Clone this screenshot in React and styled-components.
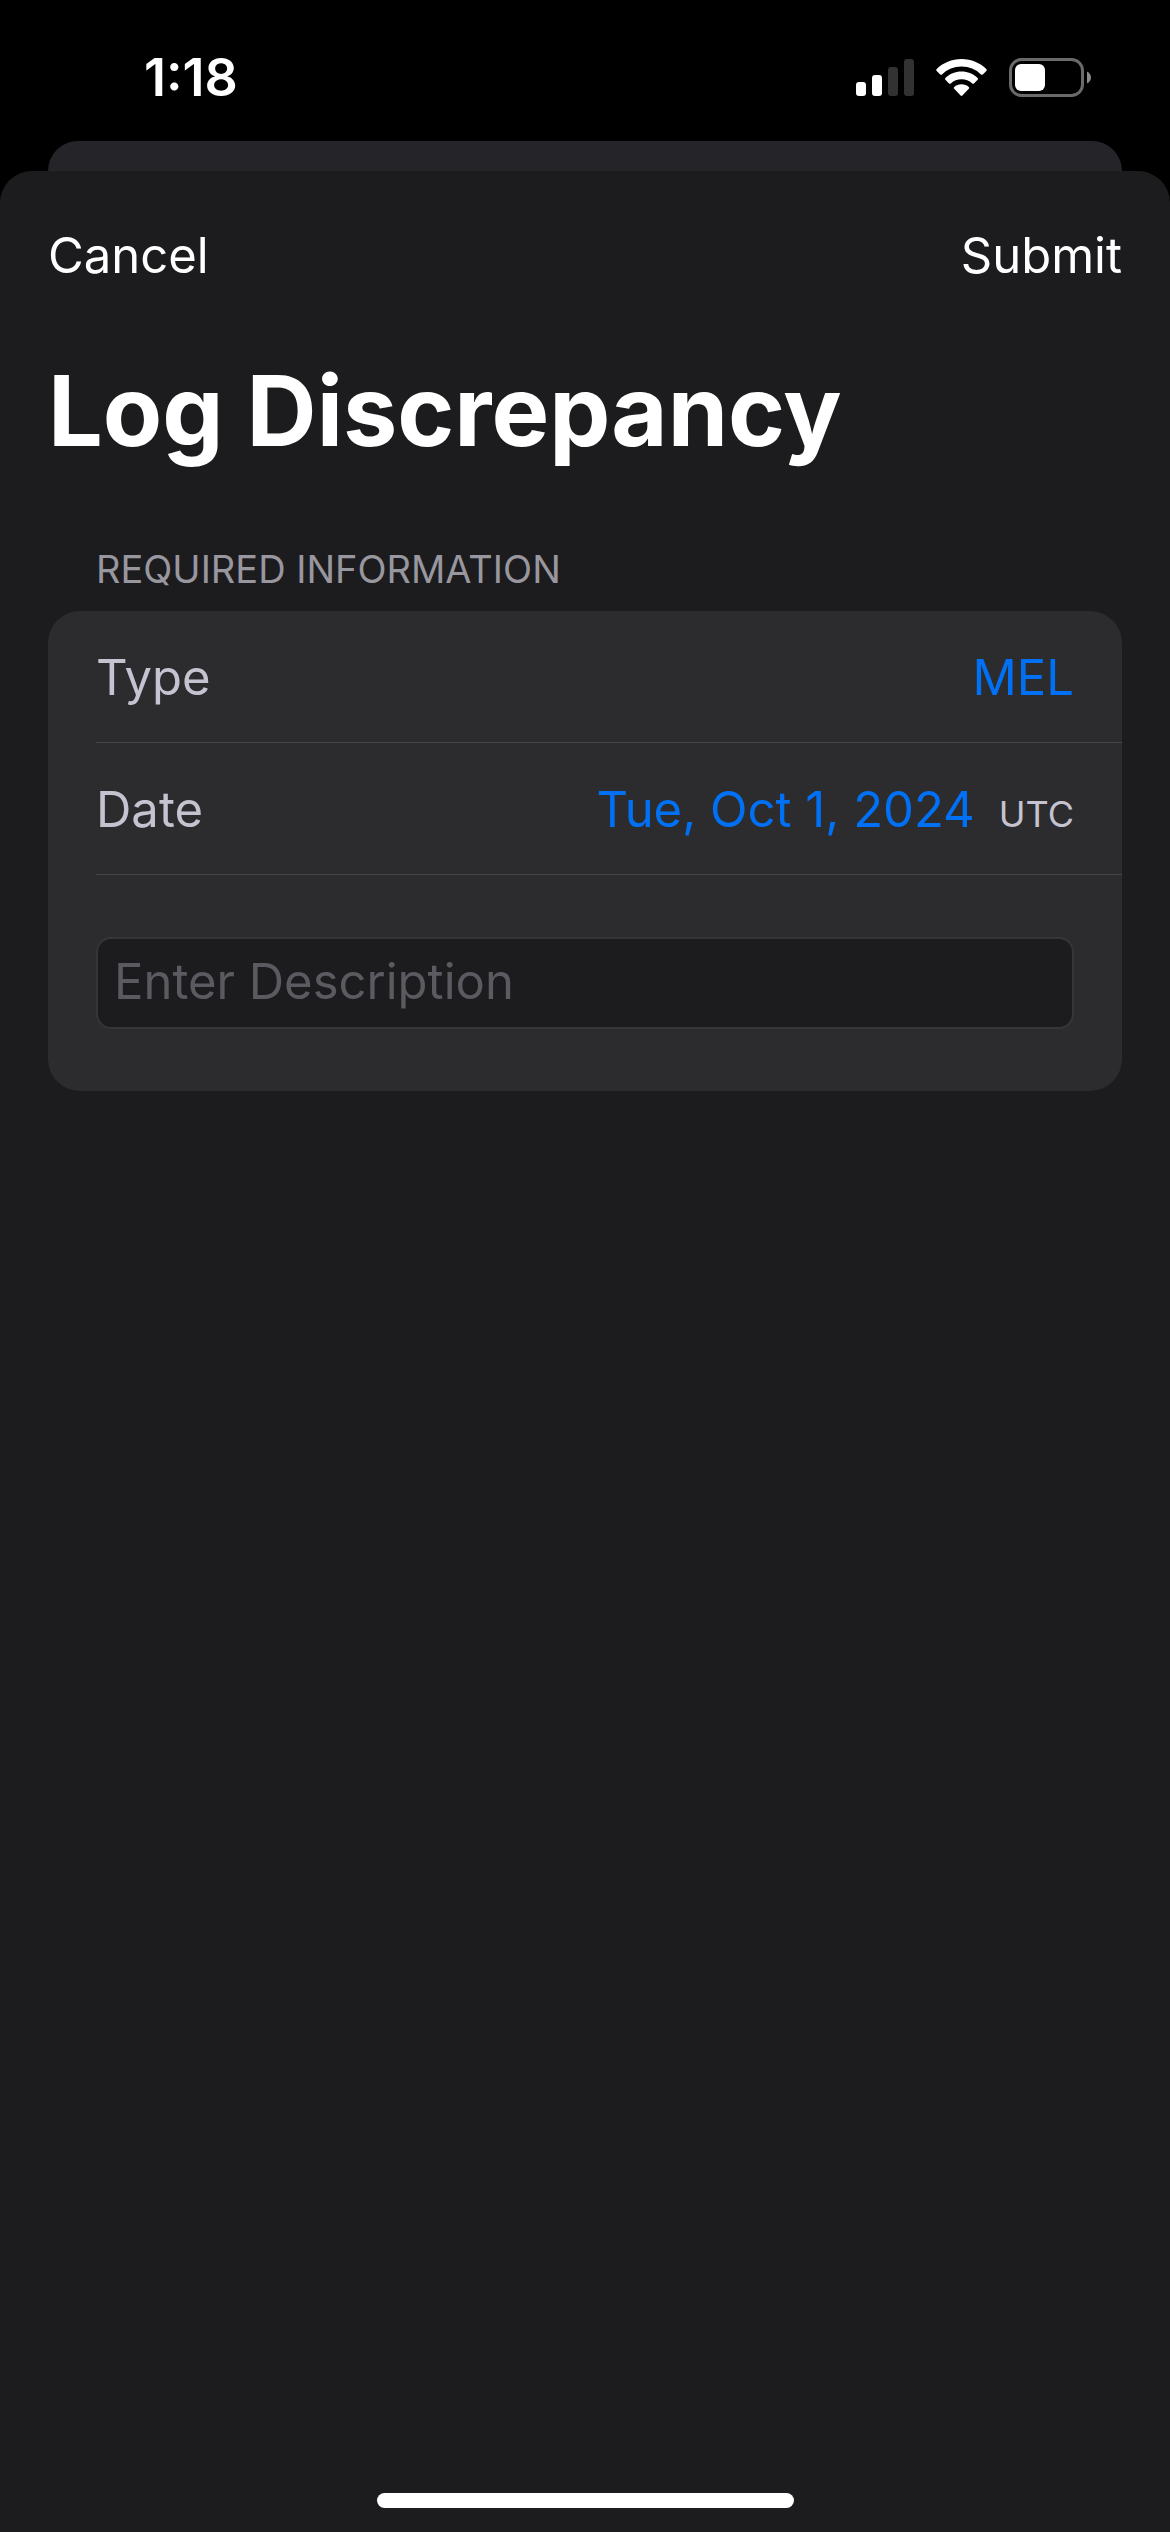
import React, { useState } from "react";
import styled, { createGlobalStyle } from "styled-components";

function SignalIcon() {
  return (
    <svg width="58" height="38" viewBox="0 0 58 38" fill="#fff">
      <rect x="0" y="23" width="10" height="14" rx="3" />
      <rect x="16" y="16" width="10" height="21" rx="3" />
      <rect x="32" y="8" width="10" height="29" rx="3" fill="#323232" />
      <rect x="48" y="0" width="10" height="37" rx="3" fill="#323232" />
    </svg>
  );
}

function WifiIcon() {
  return (
    <svg width="51" height="38" viewBox="0 0 51 38" fill="#fff">
      <path d="M25.5 0C35.2 0 44.1 3.8 50.3 10.1a1.3 1.3 0 0 1 0 1.8l-3.5 3.5a1.3 1.3 0 0 1-1.8 0A28 28 0 0 0 25.5 7.6 28 28 0 0 0 6 15.4a1.3 1.3 0 0 1-1.8 0L.7 11.9a1.3 1.3 0 0 1 0-1.8C6.9 3.8 15.8 0 25.5 0Z" />
      <path d="M25.5 12.6c6.2 0 11.9 2.4 16.1 6.3a1.3 1.3 0 0 1 0 1.9l-3.6 3.6a1.3 1.3 0 0 1-1.8 0 15.7 15.7 0 0 0-21.4 0 1.3 1.3 0 0 1-1.8 0l-3.6-3.6a1.3 1.3 0 0 1 0-1.9c4.2-3.9 9.9-6.3 16.1-6.3Z" />
      <path d="M25.5 25.2c2.8 0 5.4 1 7.3 2.7a1.3 1.3 0 0 1 0 1.9l-6.4 6.7a1.3 1.3 0 0 1-1.8 0l-6.4-6.7a1.3 1.3 0 0 1 0-1.9c1.9-1.7 4.5-2.7 7.3-2.7Z" />
    </svg>
  );
}

function BatteryIcon() {
  return (
    <svg width="82" height="40" viewBox="0 0 82 40">
      <rect
        x="1.5"
        y="1.5"
        width="72"
        height="36"
        rx="11"
        fill="none"
        stroke="#6a6a6a"
        strokeWidth="3"
      />
      <rect x="6" y="6" width="30" height="27" rx="6" fill="#fff" />
      <path d="M78 13.5c2.4 1 4 3.4 4 6s-1.6 5-4 6Z" fill="#8a8a8a" />
    </svg>
  );
}

function App() {
  const [type, setType] = useState("MEL");
  const [description, setDescription] = useState("");

  return (
    <Page>
      <GlobalStyle />
      <StatusBar>
        <Time>1:18</Time>
        <StatusIcons>
          <SignalIcon />
          <WifiIcon />
          <BatteryIcon />
        </StatusIcons>
      </StatusBar>
      <BackSheet />
      <Sheet>
        <Toolbar>
          <ToolbarButton type="button">Cancel</ToolbarButton>
          <ToolbarButton type="submit" form="discrepancy">
            Submit
          </ToolbarButton>
        </Toolbar>
        <Title>Log Discrepancy</Title>
        <form id="discrepancy" onSubmit={(e) => e.preventDefault()}>
          <SectionTitle>REQUIRED INFORMATION</SectionTitle>
          <Card>
            <Row>
              <Label htmlFor="type">Type</Label>
              <TypeSelect
                id="type"
                value={type}
                onChange={(e) => setType(e.target.value)}
              >
                <option value="MEL">MEL</option>
              </TypeSelect>
            </Row>
            <Row>
              <Label htmlFor="date">Date</Label>
              <DateValue>
                <DateButton id="date" type="button">
                  Tue, Oct 1, 2024
                </DateButton>
                <Zone>UTC</Zone>
              </DateValue>
            </Row>
            <DescriptionRow>
              <DescriptionInput
                type="text"
                aria-label="Description"
                placeholder="Enter Description"
                value={description}
                onChange={(e) => setDescription(e.target.value)}
              />
            </DescriptionRow>
          </Card>
        </form>
        <HomeIndicator />
      </Sheet>
    </Page>
  );
}

const GlobalStyle = createGlobalStyle`
  * {
    box-sizing: border-box;
  }
  body {
    margin: 0;
    background-color: #000;
  }
  body, button, input, select {
    font-family: Inter, "Liberation Sans", sans-serif;
    font-size: 49px;
    line-height: 60px;
  }
`;

const Page = styled.div`
  display: flex;
  flex-direction: column;
  min-height: 100vh;
  color: white;
`;

const StatusBar = styled.header`
  display: flex;
  justify-content: space-between;
  align-items: center;
  height: 141px;
  padding: 14px 79px 0 144px;
`;

const Time = styled.span`
  font-size: 52px;
  font-weight: 600;
`;

const StatusIcons = styled.div`
  display: flex;
  align-items: center;
  gap: 22px;
  svg {
    display: block;
  }
`;

const BackSheet = styled.div`
  height: 60px;
  margin: 0 48px -30px;
  border-radius: 30px 30px 0 0;
  background-color: #252529;
`;

const Sheet = styled.main`
  display: flex;
  flex-direction: column;
  flex: 1;
  padding: 55px 48px 24px;
  border-radius: 32px 32px 0 0;
  background-color: #1c1c1e;
`;

const Toolbar = styled.div`
  display: flex;
  justify-content: space-between;
`;

const ToolbarButton = styled.button`
  padding: 0;
  border: none;
  background: none;
  color: white;
`;

const Title = styled.h1`
  margin: 65px 0 0;
  font-size: 97px;
  font-weight: 700;
  line-height: 120px;
`;

const SectionTitle = styled.h2`
  margin: 75px 48px 19px;
  color: #98979f;
  font-size: 38px;
  font-weight: 400;
  line-height: 46px;
`;

const Card = styled.div`
  padding-left: 48px;
  border-radius: 32px;
  background-color: #2c2c2e;
`;

const Row = styled.div`
  display: flex;
  justify-content: space-between;
  align-items: center;
  height: 132px;
  padding: 3px 48px 0 0;
  border-bottom: 1px solid #464649;
`;

const Label = styled.label`
  color: #c5c3d0;
`;

const TypeSelect = styled.select`
  appearance: none;
  padding: 0;
  border: none;
  background: none;
  color: #0070f5;
  text-align-last: right;
`;

const DateValue = styled.div`
  display: flex;
  align-items: baseline;
  gap: 24px;
`;

const DateButton = styled.button`
  padding: 0;
  border: none;
  background: none;
  color: #0070f5;
`;

const Zone = styled.span`
  color: #c5c3d0;
  font-size: 36px;
  line-height: 40px;
`;

const DescriptionRow = styled.div`
  padding: 62px 48px 62px 0;
`;

const DescriptionInput = styled.input`
  display: block;
  width: 100%;
  height: 92px;
  padding: 0 16px 4px;
  border: 2px solid #363638;
  border-radius: 15px;
  outline: none;
  background-color: #1c1c1e;
  color: #c5c3d0;
  &::placeholder {
    color: #5b5a60;
    opacity: 1;
  }
`;

const HomeIndicator = styled.div`
  align-self: center;
  width: 417px;
  height: 15px;
  margin-top: auto;
  border-radius: 8px;
  background-color: white;
`;

export default App;
